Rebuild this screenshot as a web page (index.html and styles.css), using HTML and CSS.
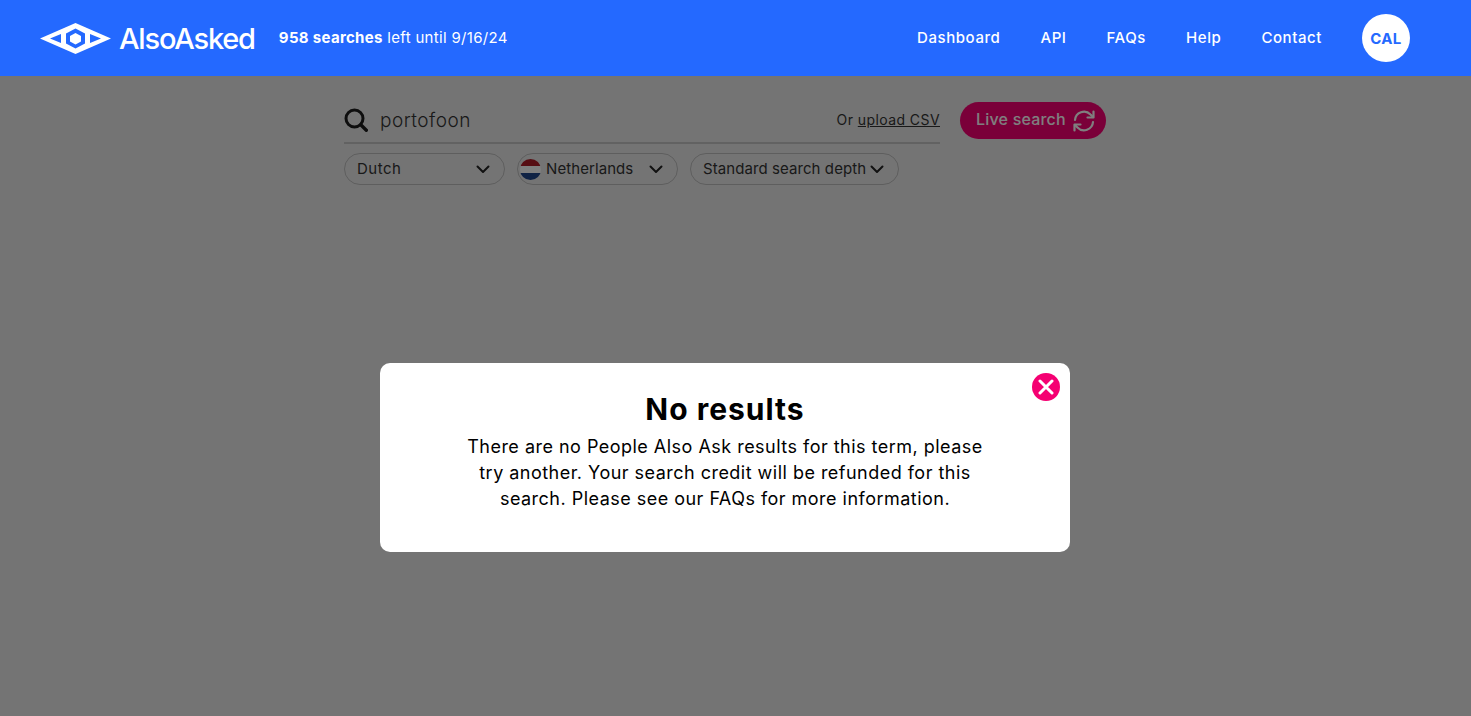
FILE: index.html
```html
<!DOCTYPE html>
<html lang="en">
<head>
<meta charset="utf-8">
<title>AlsoAsked</title>
<link rel="stylesheet" href="styles.css">
</head>
<body>
<header class="topbar">
  <a class="brand" href="#">
    <svg class="brand-mark" viewBox="0 0 71 31" width="71" height="31" aria-hidden="true">
      <path fill="#fff" d="M35.500 0 71 15.500 35.500 31 0 15.500Z"/>
      <path fill="#2469ff" d="M10 15.500 21 11V20ZM61 15.500 50 11V20Z"/>
      <path fill="#2469ff" d="M35.500 5.500 45 10.500V20.500L35.500 25.500 26 20.500V10.500Z"/>
      <path fill="#fff" d="M35.500 10 41 13V18.500L35.500 21.500 30 18.500V13Z"/>
    </svg>
    <span class="brand-name">AlsoAsked</span>
  </a>
  <p class="credits"><strong>958 searches</strong> left until 9/16/24</p>
  <nav class="nav">
    <a href="#">Dashboard</a>
    <a href="#">API</a>
    <a href="#">FAQs</a>
    <a href="#">Help</a>
    <a href="#">Contact</a>
  </nav>
  <div class="avatar">CAL</div>
</header>

<main class="search">
  <div class="search-row">
    <div class="search-field">
      <svg class="search-icon" viewBox="0 0 24 24" width="24" height="24" aria-hidden="true">
        <circle cx="10.500" cy="10.500" r="8.500" fill="none" stroke="#1d1d1d" stroke-width="3"/>
        <path d="M16.800 16.800 22.300 22.300" stroke="#1d1d1d" stroke-width="3.400" stroke-linecap="round"/>
      </svg>
      <span class="search-term">portofoon</span>
      <span class="upload">Or <a href="#">upload CSV</a></span>
    </div>
    <button class="live" type="button"><span>Live search</span>
      <svg viewBox="0 0 24 24" width="24" height="24" aria-hidden="true" fill="none" stroke="currentColor" stroke-width="2.200" stroke-linecap="round" stroke-linejoin="round">
        <path d="M3 11A9 9 0 0 1 18.500 5.500L21 8"/>
        <path d="M21.500 2.500V8.500H15.500"/>
        <path d="M21 13A9 9 0 0 1 5.500 18.500L3 16"/>
        <path d="M2.500 21.500V15.500H8.500"/>
      </svg>
    </button>
  </div>
  <div class="filters">
    <div class="select select-lang"><span>Dutch</span>
      <svg class="chev" viewBox="0 0 14 9" width="14" height="9" aria-hidden="true"><path d="M1.500 1.500 7 7 12.500 1.500"/></svg>
    </div>
    <div class="select select-country">
      <span class="flag"></span><span>Netherlands</span>
      <svg class="chev" viewBox="0 0 14 9" width="14" height="9" aria-hidden="true"><path d="M1.500 1.500 7 7 12.500 1.500"/></svg>
    </div>
    <div class="select select-depth"><span>Standard search depth</span>
      <svg class="chev" viewBox="0 0 14 9" width="14" height="9" aria-hidden="true"><path d="M1.500 1.500 7 7 12.500 1.500"/></svg>
    </div>
  </div>
</main>

<div class="overlay"></div>
<section class="modal">
  <button class="close" type="button" aria-label="Close">
    <svg viewBox="0 0 16 16" width="16" height="16" aria-hidden="true"><path d="M2 2 14 14M14 2 2 14"/></svg>
  </button>
  <h1>No results</h1>
  <p>There are no People Also Ask results for this term, please try another. Your search credit will be refunded for this search. Please see our FAQs for more information.</p>
</section>
</body>
</html>
```
FILE: styles.css
```css
* { box-sizing: border-box; }
html, body { height: 100%; }
body {
  margin: 0;
  background: #e9e9e9;
  font-family: Inter, "Open Sans", sans-serif;
  color: #222;
  overflow: hidden;
}
a { color: inherit; text-decoration: none; }

.topbar {
  position: relative;
  z-index: 3;
  height: 76px;
  background: #2469ff;
  color: #fff;
  display: flex;
  align-items: center;
  padding: 0 61px 0 40px;
}
.brand { display: flex; align-items: center; gap: 8px; }
.brand-mark { display: block; }
.brand-name {
  font-size: 29px;
  font-weight: 500;
  letter-spacing: -1.2px;
}
.credits { margin: 0 0 1px 24px; font-size: 15px; letter-spacing: .32px; }
.credits strong { font-weight: 700; }
.nav {
  margin-left: auto;
  padding-bottom: 1px;
  display: flex;
  gap: 40px;
  font-size: 15px;
  font-weight: 500;
  letter-spacing: .58px;
}
.avatar {
  margin-left: 40px;
  width: 48px;
  height: 48px;
  border-radius: 50%;
  background: #fff;
  color: #2469ff;
  font-size: 15px;
  font-weight: 700;
  letter-spacing: .3px;
  display: flex;
  align-items: center;
  justify-content: center;
}

.search { width: 762px; margin: 26px 0 0 344px; }
.search-row { display: flex; gap: 20px; align-items: flex-start; }
.search-field {
  width: 596px;
  height: 42px;
  border-bottom: 2px solid #c4c4c4;
  display: flex;
  align-items: center;
  padding-bottom: 4px;
}
.search-icon { display: block; }
.search-term { margin-left: 12px; font-size: 19px; font-weight: 300; color: #333; letter-spacing: .5px; }
.upload { margin: 0 0 2px auto; font-size: 14px; color: #333; letter-spacing: .42px; }
.upload a { text-decoration: underline; }
.live {
  width: 146px;
  height: 37px;
  border: 0;
  border-radius: 19px;
  background: #f50072;
  color: #fff;
  font: 500 16px Inter, sans-serif;
  letter-spacing: .2px;
  display: flex;
  align-items: center;
  gap: 6px;
  padding: 0 0 0 16px;
}
.live span { margin-bottom: 3px; }

.filters { display: flex; gap: 12px; margin-top: 9px; }
.select {
  height: 32px;
  border: 1px solid #bcbcbc;
  border-radius: 16px;
  display: flex;
  align-items: center;
  gap: 4px;
  font-size: 15px;
  letter-spacing: .08px;
  white-space: nowrap;
  color: #333;
  padding: 0 14px 2px 12px;
}
.select-lang { width: 161px; letter-spacing: .5px; }
.select-country { width: 161px; padding-left: 2px; gap: 5px; }
.select-depth { width: 209px; }
.select .chev { margin: 2px 0 0 auto; display: block; flex: none; }
.flag {
  width: 21px;
  height: 21px;
  margin-top: 2px;
  border-radius: 50%;
  background: linear-gradient(#ae1c28 0 33.300%, #fff 33.300% 66.600%, #21468b 66.600%);
}
.chev path { fill: none; stroke: #222; stroke-width: 2; stroke-linecap: round; stroke-linejoin: round; }

.overlay {
  position: fixed;
  inset: 0;
  z-index: 1;
  background: rgba(0, 0, 0, .5);
}
.modal {
  position: fixed;
  z-index: 2;
  left: 380px;
  top: 363px;
  width: 690px;
  height: 189px;
  background: #fff;
  border-radius: 10px;
  padding: 28px 80px 0;
  text-align: center;
  color: #000;
}
.modal h1 { margin: 0; font-size: 30px; line-height: 37px; font-weight: 700; letter-spacing: 1px; }
.modal p { margin: 6px 0 0; font-size: 18px; line-height: 26px; letter-spacing: .48px; }
.close {
  position: absolute;
  top: 10px;
  right: 10px;
  width: 28px;
  height: 28px;
  border: 0;
  border-radius: 50%;
  background: #f50072;
  padding: 0;
  display: flex;
  align-items: center;
  justify-content: center;
}
.close path { stroke: #fff; stroke-width: 3; stroke-linecap: round; }
```
